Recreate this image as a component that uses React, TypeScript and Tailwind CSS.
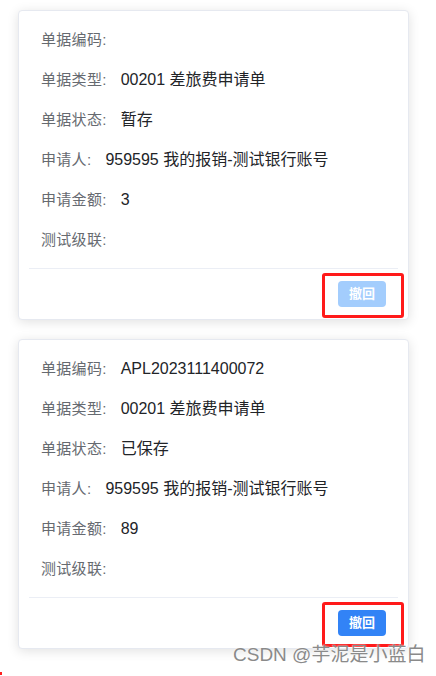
import React from "react";

type Row = { label: string; value: string };

const cards: { rows: Row[]; disabled: boolean }[] = [
  {
    disabled: true,
    rows: [
      { label: "单据编码", value: "" },
      { label: "单据类型", value: "00201 差旅费申请单" },
      { label: "单据状态", value: "暂存" },
      { label: "申请人", value: "959595 我的报销-测试银行账号" },
      { label: "申请金额", value: "3" },
      { label: "测试级联", value: "" },
    ],
  },
  {
    disabled: false,
    rows: [
      { label: "单据编码", value: "APL2023111400072" },
      { label: "单据类型", value: "00201 差旅费申请单" },
      { label: "单据状态", value: "已保存" },
      { label: "申请人", value: "959595 我的报销-测试银行账号" },
      { label: "申请金额", value: "89" },
      { label: "测试级联", value: "" },
    ],
  },
];

function Card({ rows, disabled }: { rows: Row[]; disabled: boolean }) {
  return (
    <div className="w-[391px] h-[310px] rounded-[4px] border border-[#e6e9f0] bg-white shadow-[0_2px_12px_0_rgba(0,0,0,0.12)] px-[10px] pt-[9px] flex flex-col">
      <div className="flex flex-col px-[12px]">
        {rows.map((r, i) => (
          <div key={i} className="h-10 flex items-baseline pt-[10px]">
            <span className="text-[15px] leading-[20px] text-[#666a70] tracking-[0.3px]">{r.label}:</span>
            <span className="ml-[14px] text-[16px] leading-[20px] text-[#222428]">{r.value}</span>
          </div>
        ))}
      </div>
      <div className="mt-[8px] h-px bg-[#ebeef5]" />
      <div className="flex justify-end px-[12px] pt-[12px]">
        <div className="relative">
          <button
            className={
              disabled
                ? "w-[48px] h-[26px] rounded-[4px] bg-[#a3cdfd] text-white text-[13px] font-semibold flex items-center justify-center"
                : "w-[48px] h-[26px] rounded-[4px] bg-[#3283f6] text-white text-[13px] font-semibold flex items-center justify-center"
            }
          >
            撤回
          </button>
          <div className="absolute left-[-16px] right-[-18px] top-[-8px] bottom-[-11px] border-[3px] border-[#ff1a1a] rounded-[3px] pointer-events-none" />
        </div>
      </div>
    </div>
  );
}

export default function App() {
  return (
    <div className="relative w-full min-h-[676px] bg-white overflow-hidden font-['Liberation_Sans','Noto_Sans_CJK_SC',sans-serif]">
      <div className="flex flex-col gap-[19px] pl-[18px] pt-[10px]">
        {cards.map((c, i) => (
          <Card key={i} rows={c.rows} disabled={c.disabled} />
        ))}
      </div>
      <div className="absolute left-[233px] top-[643px] text-[19px] leading-[24px] text-[#8a8a8a] whitespace-nowrap [text-shadow:0_0_2px_#fff]">
        CSDN @芋泥是小蓝白
      </div>
      <div className="absolute left-0 top-[672px] w-[2px] h-[3px] bg-[#ff2020]" />
    </div>
  );
}
